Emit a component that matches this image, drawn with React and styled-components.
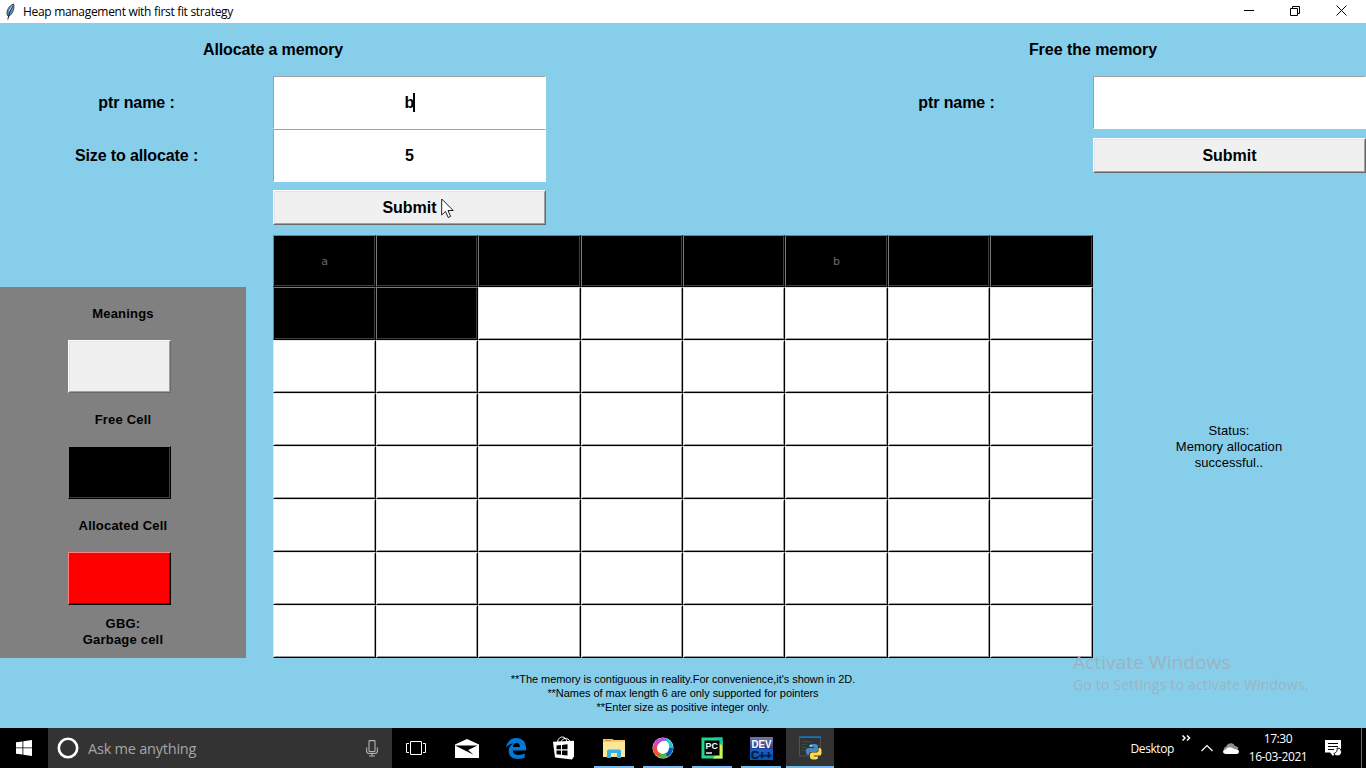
import React from "react";
import styled, { createGlobalStyle, css } from "styled-components";

const GlobalStyle = createGlobalStyle`
  * { box-sizing: border-box; }
  html, body { margin: 0; padding: 0; overflow: hidden; }
  svg { display: block; flex: none; }
`;

const arial = `"Liberation Sans", Arial, sans-serif`;
const segoe = `"Open Sans", "Noto Sans", sans-serif`;

const Screen = styled.div`
  position: relative;
  display: flex;
  flex-direction: column;
  width: 1366px;
  height: 768px;
  overflow: hidden;
  background: #87ceeb;
  color: #000;
  font-family: ${arial};
`;

const TitleBar = styled.header`
  display: flex;
  align-items: center;
  height: 23px;
  flex: none;
  padding: 0 2px 0 4px;
  background: #fff;
`;

const Title = styled.span`
  flex: 1;
  padding-left: 6px;
  font: 12px/16px ${segoe};
  letter-spacing: -0.31px;
  white-space: nowrap;
`;

const WindowButton = styled.span`
  display: flex;
  align-items: center;
  justify-content: center;
  width: 46px;
  height: 21px;
  margin-bottom: 2px;
`;

const Board = styled.main`
  display: grid;
  flex: none;
  height: 705px;
  grid-template-columns: 273px 273px 274px 273px 273px;
  grid-template-rows: 53px 53px 53px 53px 52px 371px 70px;
`;

const Slot = styled.div`
  display: flex;
  align-items: center;
  justify-content: center;
  grid-column: ${(p) => p.$col};
  grid-row: ${(p) => p.$row};
  padding-bottom: ${(p) => p.$lift || 0}px;
`;

const Label = styled.span`
  font-size: 16px;
  font-weight: bold;
  line-height: 18px;
  letter-spacing: ${(p) => p.$track || 0}px;
  white-space: pre;
`;

const Entry = styled.div`
  display: flex;
  align-items: center;
  justify-content: center;
  align-self: stretch;
  flex: 1;
  background: #fff;
  border: 1px solid;
  border-color: #a0a0a0 #fff #fff #a0a0a0;
  font-size: 16px;
  font-weight: bold;
`;

const Caret = styled.i`
  width: 2px;
  height: 19px;
  margin: 0 -1px 0 -1px;
  background: #000;
`;

const raised = css`
  border: 1px solid;
  border-color: ${(p) => p.$outer || "#fff #696969 #696969 #fff"};
  &::before {
    content: "";
    position: absolute;
    inset: 0;
    border: 1px solid;
    border-color: ${(p) => p.$inner || "#e3e3e3 #a0a0a0 #a0a0a0 #e3e3e3"};
  }
`;

const PushButton = styled.div`
  position: relative;
  display: flex;
  align-items: center;
  justify-content: center;
  flex: 1;
  height: 35px;
  background: #f0f0f0;
  font-size: 16px;
  font-weight: bold;
  ${raised}
`;

const Pointer = styled.svg`
  position: absolute;
  left: 167px;
  top: 7px;
`;

const MemoryGrid = styled.section`
  display: grid;
  grid-column: 2 / 5;
  grid-row: 5 / 7;
  grid-template-columns: 103px 102px 103px 102px 102px 103px 102px 103px;
  grid-template-rows: 52px repeat(7, 53px);
`;

const looks = {
  free: { $bg: "#fff", $outer: "#e6e6e6 #000 #000 #e6e6e6", $inner: "#fff #999 #999 #fff" },
  used: { $bg: "#000", $outer: "#7c7c7c #000 #000 #7c7c7c", $inner: "#000 #404040 #404040 #000" },
  plain: { $bg: "#f0f0f0" },
  usedKey: { $bg: "#000", $outer: "#808080 #000 #000 #808080", $inner: "#000 #404040 #404040 #000" },
  garbage: { $bg: "#f00", $outer: "#ff8080 #000 #000 #ff8080", $inner: "#f00 #990000 #990000 #f00" },
};

const Cell = styled.div`
  position: relative;
  display: flex;
  align-items: center;
  justify-content: center;
  background: ${(p) => p.$bg};
  color: #6d6d6d;
  font: 11px/14px "DejaVu Sans", sans-serif;
  ${raised}
`;

const CellName = styled.span`
  padding-top: 1px;
`;

const Legend = styled.aside`
  display: flex;
  flex-direction: column;
  align-items: center;
  grid-column: 1;
  grid-row: 6;
  width: 246px;
  background: #808080;
`;

const LegendText = styled.div`
  display: flex;
  align-items: center;
  height: 53px;
  font-size: 13px;
  font-weight: bold;
  line-height: 16px;
  letter-spacing: 0.2px;
  text-align: center;
  white-space: pre;
`;

const Swatch = styled(Cell)`
  width: 103px;
  height: 53px;
  margin-right: 7px;
`;

const Status = styled.p`
  margin: 0;
  padding-right: 1px;
  font-size: 13px;
  line-height: 16px;
  letter-spacing: 0.05px;
  text-align: center;
  white-space: pre;
`;

const Notes = styled.p`
  margin: 0;
  font-size: 11px;
  line-height: 14px;
  letter-spacing: -0.05px;
  text-align: center;
  white-space: pre;
`;

const Watermark = styled.div`
  position: absolute;
  left: 1073px;
  top: 650px;
  color: #9db3bf;
  font-family: ${segoe};
  white-space: nowrap;
`;

const WatermarkTitle = styled.div`
  font-size: 19px;
  line-height: 25px;
  letter-spacing: 0.1px;
`;

const WatermarkLine = styled.div`
  font-size: 14px;
  line-height: 20px;
  letter-spacing: 0.18px;
`;

const Taskbar = styled.footer`
  display: flex;
  flex: none;
  height: 40px;
  background: #000;
  color: #fff;
  font-family: ${segoe};
`;

const StartButton = styled.div`
  display: flex;
  align-items: center;
  justify-content: center;
  width: 48px;
`;

const Search = styled.div`
  display: flex;
  align-items: center;
  width: 344px;
  padding: 0 14px 0 9px;
  background: #333;
  color: #a6a6a6;
`;

const SearchText = styled.span`
  flex: 1;
  padding-left: 9px;
  font-size: 14.5px;
  letter-spacing: -0.22px;
`;

const TaskItem = styled.div`
  display: flex;
  align-items: center;
  justify-content: center;
  width: ${(p) => p.$width || 49}px;
  background: ${(p) => (p.$active ? "#333" : "transparent")};
  box-shadow: ${(p) => (p.$active ? "inset 0 -2px #76b9ed" : "none")};
`;

const Running = styled.div`
  display: flex;
  align-items: center;
  justify-content: center;
  width: 40px;
  height: 40px;
  border-bottom: 2px solid #76b9ed;
  padding-top: 2px;
`;

const Tray = styled.div`
  display: flex;
  align-items: center;
  margin-left: auto;
  font-size: 12px;
  letter-spacing: -0.4px;
`;

const Chevrons = styled.svg`
  align-self: flex-start;
  margin: 7px 10px 0 8px;
`;

const TrayChevron = styled.svg`
  margin-right: 10px;
`;

const Clock = styled.div`
  width: 60px;
  margin: 0 17px 0 9px;
  line-height: 18px;
  text-align: center;
  white-space: nowrap;
`;

const ShowDesktop = styled.div`
  width: 5px;
  height: 40px;
  margin-left: 19px;
  border-left: 1px solid #6b6b6b;
`;

const Feather = () => (
  <svg width="13" height="18" viewBox="0 0 13 18">
    <path d="M3.4 12.5C1.8 8 5 2.5 9.7 1C10.6 6 8.6 11 4.6 13.5Z" fill="#5b93cf" stroke="#26323e" strokeWidth=".9" />
    <path d="M8.8 3L5.6 8.5" stroke="#c3e0f6" strokeWidth="1.5" />
    <path d="M9 3Q5 8.5 3.8 16.5" fill="none" stroke="#111" strokeWidth=".9" />
  </svg>
);

const WindowsLogo = () => (
  <svg width="16" height="16" viewBox="0 0 16 16" fill="#fff">
    <path d="M0 2.3L6.5 1.4V7.5H0ZM7.3 1.3L16 0V7.5H7.3ZM0 8.3H6.5V14.6L0 13.7ZM7.3 8.3H16V16L7.3 14.7Z" />
  </svg>
);

const Mic = () => (
  <svg width="12" height="17" viewBox="0 0 12 17" fill="none" stroke="#b4b4b4" strokeWidth="1.1">
    <rect x="3" y=".6" width="6" height="11" rx=".6" />
    <path d="M.6 7.5V11Q.6 13.5 3 13.5H9Q11.4 13.5 11.4 11V7.5M6 13.5V16M3 16H9" />
  </svg>
);

const TaskView = () => (
  <svg width="20" height="14" viewBox="0 0 20 14" fill="none" stroke="#fff">
    <path d="M4.5.5H15.5V13.5H4.5ZM3 2.5H.5V11.5H3M17 2.5H19.5V11.5H17" />
  </svg>
);

const Mail = () => (
  <svg width="24" height="19" viewBox="0 0 24 19">
    <path d="M0 5.5L12 0L24 5.5V19H0Z" fill="#fff" />
    <path d="M0 6.5H22.5L13.2 11L18.5 15.8L9.5 11.3Z" fill="#000" />
  </svg>
);

const Edge = () => (
  <svg width="20" height="21" viewBox="0 0 20 21">
    <path d="M0 9.5C1 3.5 5 0 10.5 0C16.5 0 20 4.3 20 10V12.4H6.8C7 15.5 9.5 17 12.8 17C15 17 17 16.3 18.7 15.3V19.6C16.8 20.6 14.3 21 11.8 21C6 21 2.7 17.8 2.7 13C2.7 9.6 4.5 7 7.6 5.6C4.4 5.7 1.8 7.2 0 9.5ZM6.9 8.9H13.9C13.9 6.5 12.9 5.1 10.7 5.1C8.4 5.1 7.2 6.7 6.9 8.9Z" fill="#0078d7" fillRule="evenodd" />
  </svg>
);

const Store = () => (
  <svg width="22" height="24" viewBox="0 0 22 24">
    <path d="M4.5 6.5C5 2 7.5 1 9.5 1C12 1 13.5 3 14 6M8 6C9 2.5 15 0 17 6" fill="none" stroke="#fff" />
    <path d="M0 5.8L21 4.8V20.5L19 23.5L2 21.5L0 6Z" fill="#fff" />
    <path d="M3.5 9.5L8 9V13.3H3.5ZM9 8.9L14.5 8.3V13.3H9ZM3.5 14.4H8V18.8L3.5 18.2ZM9 14.4H14.5V19.6L9 19Z" fill="#000" />
  </svg>
);

const Explorer = () => (
  <svg width="22" height="19" viewBox="0 0 22 19">
    <path d="M0 0H9L11 1H22V18H0Z" fill="#f5ce5b" />
    <path d="M0 3H22V18H0Z" fill="#fbe69a" />
    <path d="M2 1H8V2H2Z" fill="#e5862b" />
    <path d="M4 19V12Q4 10.5 5.5 10.5H16.5Q18 10.5 18 12V19H14V14H8V19Z" fill="#35b2e5" />
  </svg>
);

const Webex = () => (
  <svg width="22" height="22" viewBox="0 0 22 22" fill="none">
    <circle cx="11" cy="11" r="10.5" fill="#e7f3f7" />
    <g strokeWidth="4.2">
      <path d="M3 11A8 8 0 0 1 7 4" stroke="#ed3fa9" />
      <path d="M5.5 5.5A8 8 0 0 1 15 4" stroke="#ba4be8" />
      <path d="M14 3.6A8 8 0 0 1 19 11" stroke="#16ccd0" />
      <path d="M19 11A8 8 0 0 1 13 18.7" stroke="#075bb0" />
      <path d="M14.5 18.2A8 8 0 0 1 6.5 17.6" stroke="#4cb83c" />
      <path d="M7.5 18.2A8 8 0 0 1 3 10" stroke="#f0542e" />
    </g>
    <ellipse cx="11.2" cy="10" rx="5.4" ry="6.6" transform="rotate(35 11.2 10)" fill="#fff" />
  </svg>
);

const PyCharm = () => (
  <svg width="22" height="22" viewBox="0 0 22 22">
    <rect x=".5" y=".5" width="21" height="21" fill="#21d789" />
    <path d="M12 21.5L17 14L18 3L21.5 5V21.5Z" fill="#d9ed4d" />
    <path d="M13 .5H21.5V9L17 5Z" fill="#12c7aa" />
    <rect x="3.5" y="3.5" width="15" height="15" fill="#050505" />
    <text x="4.6" y="11.8" fill="#fff" fontFamily="Liberation Sans, sans-serif" fontSize="8.8" fontWeight="bold">PC</text>
    <path d="M5 16H11" stroke="#fff" strokeWidth="1.4" />
  </svg>
);

const DevCpp = () => (
  <svg width="23" height="23" viewBox="0 0 23 23">
    <defs>
      <linearGradient id="dev" x2="0" y2="1">
        <stop stopColor="#6f76a8" />
        <stop offset=".5" stopColor="#2f3c8e" />
        <stop offset=".55" stopColor="#1261c7" />
        <stop offset="1" stopColor="#0754b5" />
      </linearGradient>
    </defs>
    <rect width="23" height="23" fill="url(#dev)" />
    <text x="1.5" y="11" fill="#fff" fontFamily="Liberation Sans, sans-serif" fontSize="10" fontWeight="bold" textLength="20" lengthAdjust="spacingAndGlyphs">DEV</text>
    <text x="1" y="22" fill="#041c44" stroke="#041c44" strokeWidth=".5" fontFamily="Liberation Sans, sans-serif" fontSize="11" fontWeight="bold" textLength="21" lengthAdjust="spacingAndGlyphs">C++</text>
  </svg>
);

const PythonApp = () => (
  <svg width="24" height="24" viewBox="0 0 24 24">
    <path d="M1.5 1H22.5V20H1.5Z" fill="#303234" stroke="#4c5358" />
    <path d="M1 1.2H23" stroke="#0879d0" strokeWidth="1.6" />
    <path d="M4 5.5H13M4 8.5H9M4 11.5H8M4 14.5H8" stroke="#285439" />
    <path d="M15 8H17Q20 8 20 10.5V14Q20 16 18 16H13Q11 16 11 18V19H10Q8 19 8 16V14.5Q8 12 10.5 12H16V11H11V10Q11 8 15 8Z" fill="#4b88bb" />
    <path d="M16 23.5H15Q12 23.5 12 21V18Q12 16.5 14 16.5H18.5Q20.6 16.5 20.6 14V12H21.5Q23.5 12 23.5 15V17Q23.5 19.5 21 19.5H16V20.5H20V21.5Q20 23.5 16 23.5Z" fill="#ffd84a" />
    <circle cx="13" cy="9.7" r=".8" fill="#fff" />
    <circle cx="18" cy="22" r=".7" fill="#fff" />
  </svg>
);

const Cloud = () => (
  <svg width="16" height="11" viewBox="0 0 16 11">
    <path d="M1 8Q-.3 4.5 3.2 3.5Q4.5 0 8.4.2Q11 .3 12 3Q15 3 15.4 6L10 9Z" fill="#8e8e8e" />
    <path d="M3 11Q0 11 0 8.6Q0 6.6 2.8 6.4Q4.5 3.5 8 4.5L12 6.2Q16 6 16 8.8Q16 11 13.5 11Z" fill="#fff" />
  </svg>
);

const ActionCenter = () => (
  <svg width="17" height="17" viewBox="0 0 17 17">
    <path d="M0 0H16V12.5H11L8 16L5 12.5H0Z" fill="#fff" />
    <path d="M3 3.5H13M3 6.5H13M3 9.5H9" stroke="#000" />
    <path d="M12 8A4 4 0 1 1 8.8 13.6A4.4 4.4 0 0 0 12 8Z" fill="#fff" stroke="#000" strokeWidth=".9" />
  </svg>
);

const names = { 0: "a", 5: "b" };
const cells = Array.from({ length: 64 }, (_, i) => ({ used: i < 10, name: names[i] }));

export default function App() {
  return (
    <Screen>
      <GlobalStyle />
      <TitleBar>
        <Feather />
        <Title>Heap management with first fit strategy</Title>
        <WindowButton>
          <svg width="10" height="11" viewBox="0 0 10 11"><path d="M0 5.5H10" stroke="#000" /></svg>
        </WindowButton>
        <WindowButton>
          <svg width="10" height="10" viewBox="0 0 10 10" fill="none" stroke="#000">
            <path d="M.5 2.5H7.5V9.5H.5ZM2.5 2.5V.5H9.5V7.5H7.5" />
          </svg>
        </WindowButton>
        <WindowButton>
          <svg width="11" height="11" viewBox="0 0 11 11"><path d="M.5.5L10.5 10.5M10.5.5L.5 10.5" stroke="#000" /></svg>
        </WindowButton>
      </TitleBar>

      <Board>
        <Slot $col="1 / 3" $row="1"><Label $track={-0.13}>Allocate a memory</Label></Slot>
        <Slot $col="4 / 6" $row="1"><Label $track={-0.05}>Free the memory</Label></Slot>

        <Slot $col="1" $row="2"><Label $track={-0.1}>ptr name :</Label></Slot>
        <Slot $col="2" $row="2"><Entry>b<Caret /></Entry></Slot>
        <Slot $col="1" $row="3"><Label $track={-0.12}>Size to allocate :</Label></Slot>
        <Slot $col="2" $row="3"><Entry>5</Entry></Slot>
        <Slot $col="2" $row="4" $lift={2}>
          <PushButton>
            Submit
            <Pointer width="13" height="21" viewBox="0 0 13 21">
              <path d="M.7 1V17L4.5 13.4L7.2 19.5L9.6 18.4L7 12.5H12.2Z" fill="#fff" stroke="#1c1c2c" />
            </Pointer>
          </PushButton>
        </Slot>

        <Slot $col="4" $row="2"><Label $track={-0.1}>ptr name :</Label></Slot>
        <Slot $col="5" $row="2"><Entry /></Slot>
        <Slot $col="5" $row="3"><PushButton>Submit</PushButton></Slot>

        <MemoryGrid>
          {cells.map((c, i) => (
            <Cell key={i} {...(c.used ? looks.used : looks.free)}>
              {c.name && <CellName>{c.name}</CellName>}
            </Cell>
          ))}
        </MemoryGrid>

        <Legend>
          <LegendText>Meanings</LegendText>
          <Swatch {...looks.plain} />
          <LegendText>Free Cell</LegendText>
          <Swatch {...looks.usedKey} />
          <LegendText>Allocated Cell</LegendText>
          <Swatch {...looks.garbage} />
          <LegendText>{"GBG:\nGarbage cell"}</LegendText>
        </Legend>

        <Slot $col="5" $row="5 / 7">
          <Status>{"Status:\nMemory allocation\nsuccessful.."}</Status>
        </Slot>

        <Slot $col="2 / 5" $row="7">
          <Notes>
            {"**The memory is contiguous in reality.For convenience,it's shown in 2D.\n**Names of max length 6 are only supported for pointers\n**Enter size as positive integer only."}
          </Notes>
        </Slot>
      </Board>

      <Watermark>
        <WatermarkTitle>Activate Windows</WatermarkTitle>
        <WatermarkLine>Go to Settings to activate Windows.</WatermarkLine>
      </Watermark>

      <Taskbar>
        <StartButton><WindowsLogo /></StartButton>
        <Search>
          <svg width="22" height="22" viewBox="0 0 22 22"><circle cx="11" cy="11" r="9.2" fill="none" stroke="#fff" strokeWidth="2.6" /></svg>
          <SearchText>Ask me anything</SearchText>
          <Mic />
        </Search>
        <TaskItem $width={48}><TaskView /></TaskItem>
        <TaskItem $width={54}><Mail /></TaskItem>
        <TaskItem $width={44}><Edge /></TaskItem>
        <TaskItem $width={52}><Store /></TaskItem>
        <TaskItem $width={48}><Running><Explorer /></Running></TaskItem>
        <TaskItem $width={50}><Running><Webex /></Running></TaskItem>
        <TaskItem $width={48}><Running><PyCharm /></Running></TaskItem>
        <TaskItem $width={50}><Running><DevCpp /></Running></TaskItem>
        <TaskItem $width={48} $active><PythonApp /></TaskItem>
        <Tray>
          <span>Desktop</span>
          <Chevrons width="9" height="6" viewBox="0 0 9 6" fill="none" stroke="#fff" strokeWidth="1.5">
            <path d="M.5.5L3 3L.5 5.5M5 .5L7.5 3L5 5.5" />
          </Chevrons>
          <TrayChevron width="12" height="8" viewBox="0 0 12 8">
            <path d="M.5 7L6 1.5L11.5 7" fill="none" stroke="#fff" strokeWidth="1.2" />
          </TrayChevron>
          <Cloud />
          <Clock>17:30<br />16-03-2021</Clock>
          <ActionCenter />
          <ShowDesktop />
        </Tray>
      </Taskbar>
    </Screen>
  );
}
